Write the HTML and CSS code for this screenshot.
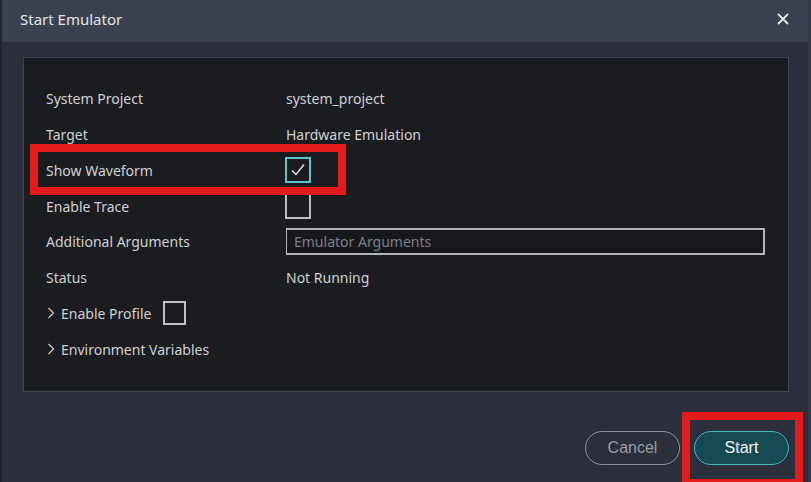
FILE: index.html
```html
<!DOCTYPE html>
<html>
<head>
<meta charset="utf-8">
<link rel="stylesheet" href="styles.css">
</head>
<body>
<div class="dialog">
  <div class="titlebar">
    <span class="title">Start Emulator</span>
    <svg class="close" width="12" height="12" viewBox="0 0 12 12"><path d="M1.5 1.5L10.5 10.5M10.5 1.5L1.5 10.5" stroke="#e6e8ec" stroke-width="1.8" stroke-linecap="round"/></svg>
  </div>
  <div class="body">
    <div class="panel">
      <div class="grid">
        <div class="label">System Project</div><div class="value">system_project</div>
        <div class="label">Target</div><div class="value">Hardware Emulation</div>
        <div class="label">Show Waveform</div><div class="value"><span class="check checked"><svg width="18" height="16" viewBox="0 0 18 16"><path d="M3 8.5L7 12.5L15 2.5" fill="none" stroke="#e8e8e8" stroke-width="1.4"/></svg></span></div>
        <div class="label">Enable Trace</div><div class="value"><span class="check"></span></div>
        <div class="label">Additional Arguments</div><div class="value"><input class="args" type="text" placeholder="Emulator Arguments"></div>
        <div class="label">Status</div><div class="value">Not Running</div>
        <div class="label expand"><svg class="chev" width="8" height="12" viewBox="0 0 8 12"><path d="M1.5 1L6.5 6L1.5 11" fill="none" stroke="#cfd0d3" stroke-width="1.2"/></svg>Enable Profile<span class="check small"></span></div><div class="value"></div>
        <div class="label expand"><svg class="chev" width="8" height="12" viewBox="0 0 8 12"><path d="M1.5 1L6.5 6L1.5 11" fill="none" stroke="#cfd0d3" stroke-width="1.2"/></svg>Environment Variables</div><div class="value"></div>
      </div>
    </div>
    <div class="footer">
      <button class="btn cancel">Cancel</button>
      <button class="btn start">Start</button>
    </div>
  </div>
  <div class="mark mark-wave"></div>
  <div class="mark mark-start"></div>
</div>
</body>
</html>
```
FILE: styles.css
```css
html, body {
  margin: 0;
  padding: 0;
  width: 811px;
  height: 482px;
  overflow: hidden;
  background: #2a2f3b;
}
.dialog {
  position: relative;
  width: 811px;
  height: 482px;
  box-sizing: border-box;
  border-left: 2px solid #20242c;
  border-right: 3px solid #323845;
  background: #2a2f3b;
  font-family: "Noto Sans", "Open Sans", sans-serif;
  color: #cfd0d3;
  display: flex;
  flex-direction: column;
}
.titlebar {
  height: 42px;
  flex: none;
  background: #3a4050;
  display: flex;
  align-items: center;
  justify-content: space-between;
  padding: 0 19px 0 18px;
}
.title {
  font-size: 15px;
  color: #e3e4e7;
  margin-top: -4px;
}
.close {
  margin-top: -4px;
}
.body {
  flex: 1;
  display: flex;
  flex-direction: column;
  padding: 15px 19px 0 21px;
}
.panel {
  height: 335px;
  box-sizing: border-box;
  background: #1b1c20;
  border: 1px solid #3f4553;
  padding: 23px 22px 0 22px;
}
.grid {
  display: grid;
  grid-template-columns: 240px 479px;
  grid-auto-rows: 35.75px;
  align-items: center;
  font-size: 14px;
}
.label {
  color: #cfd0d3;
  display: flex;
  align-items: center;
}
.value {
  color: #cfd0d3;
  display: flex;
  align-items: center;
}
.chev {
  flex: none;
  margin-left: 1px;
  margin-right: 6px;
}
.check {
  width: 26px;
  height: 26px;
  box-sizing: border-box;
  border: 2px solid #bfc1c4;
  background: #1b1c20;
  display: flex;
  align-items: center;
  justify-content: center;
  margin-left: -1px;
}
.check.checked {
  border-color: #5ec5cc;
}
.check.small {
  width: 23px;
  height: 24px;
  margin-left: 12px;
}
.args {
  width: 479px;
  height: 27px;
  box-sizing: border-box;
  background: #16171b;
  border: 1px solid #b3b5b8;
  border-width: 2px 2px 2px 1px;
  color: #cfd0d3;
  font-family: "Noto Sans", "Open Sans", sans-serif;
  font-size: 14px;
  padding: 0 7px;
  outline: none;
}
.args::placeholder {
  color: #7c7e83;
}
.footer {
  display: flex;
  justify-content: flex-end;
  gap: 14px;
  padding-top: 39px;
}
.btn {
  width: 95px;
  height: 34px;
  border-radius: 17px;
  font-family: "Liberation Sans", Arial, sans-serif;
  font-size: 16px;
  box-sizing: border-box;
}
.cancel {
  background: transparent;
  border: 1px solid #8d9098;
  color: #9a9ca2;
}
.start {
  background: #164a53;
  border: 1px solid #41b5bb;
  color: #f2f4f5;
}
.mark {
  position: absolute;
  border: 8px solid #e31b1d;
  box-sizing: border-box;
}
.mark-wave {
  left: 28px;
  top: 144px;
  width: 316px;
  height: 51px;
}
.mark-start {
  left: 680px;
  top: 412px;
  width: 121px;
  height: 75px;
}
```
